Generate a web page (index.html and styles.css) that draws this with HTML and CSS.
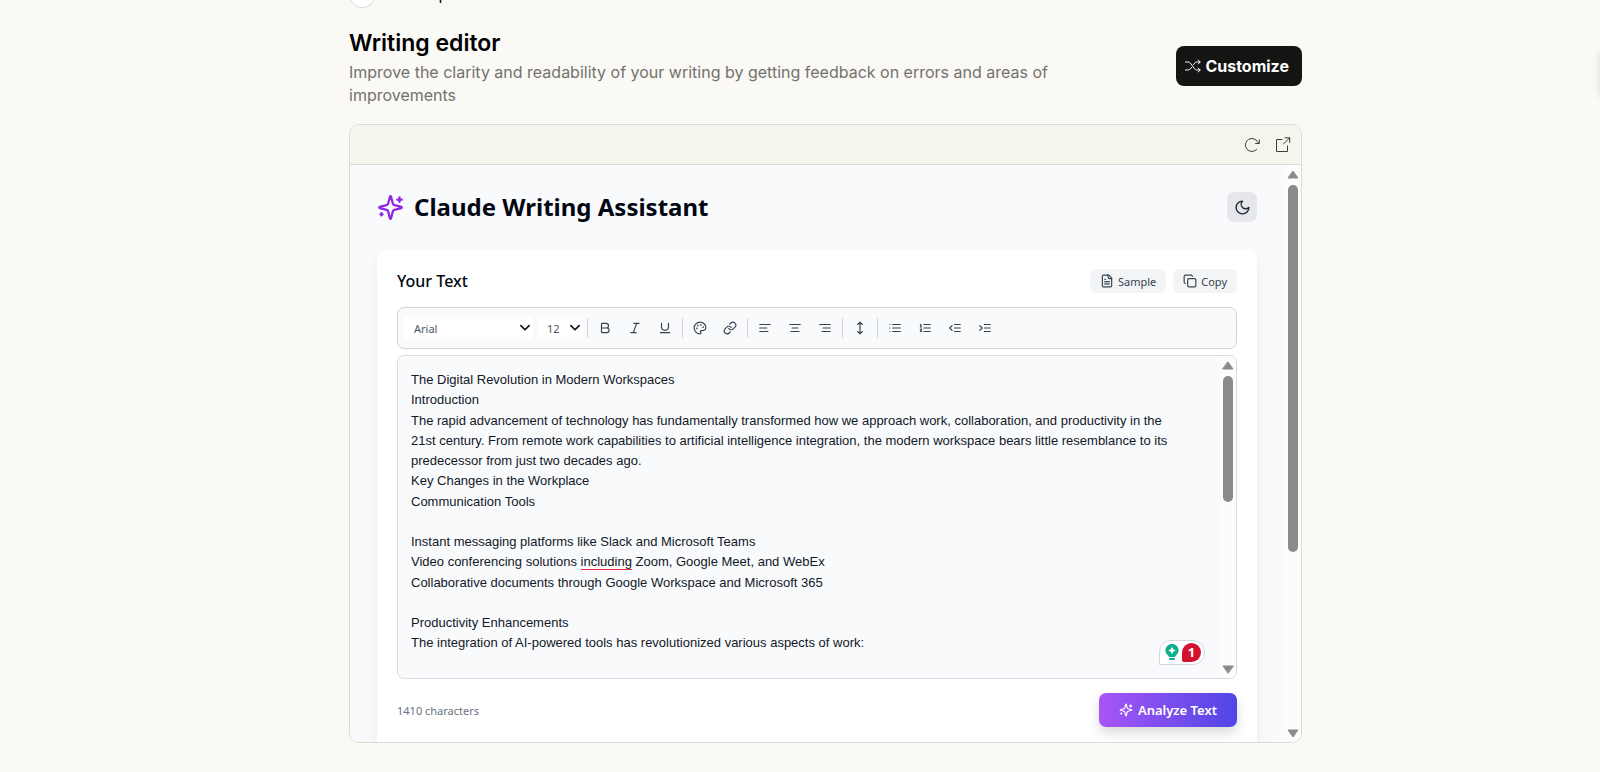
FILE: index.html
```html
<!DOCTYPE html>
<html lang="en">
<head>
    <meta charset="UTF-8">
    <meta name="viewport" content="width=device-width, initial-scale=1.0">
    <title>Writing editor</title>
    <link rel="stylesheet" href="styles.css">
</head>
<body>
    <main class="page">
        <div class="author">
            <span class="avatar"></span>
            <span class="author-name">Anthropic</span>
        </div>

        <header class="intro">
            <div class="intro-text">
                <h1>Writing editor</h1>
                <p>Improve the clarity and readability of your writing by getting feedback on errors and areas of improvements</p>
            </div>
            <button class="customize" type="button">
                <svg width="16" height="16" viewBox="0 0 16 16" fill="none" stroke="currentColor" stroke-linecap="round" stroke-linejoin="round"><path d="M.5 4h2.2c1.600 0 2.500.7 3.400 2l2.800 4c.9 1.300 1.800 2 3.400 2H15M.5 12h2.200c1.600 0 2.500-.7 3.400-2l.4-.6M8.500 6.600l.4-.6c.9-1.300 1.800-2 3.400-2H15M13.200 2 15.200 4l-2 2M13.200 10l2 2-2 2"/></svg>
                Customize
            </button>
        </header>

        <section class="frame">
            <div class="frame-bar">
                <button type="button" aria-label="Reload">
                    <svg width="16" height="16" viewBox="0 0 16 16" fill="none" stroke="currentColor" stroke-linecap="round" stroke-linejoin="round"><path d="M12.600 12.500a6.500 6.500 0 1 1 1.300-7L15 6.200M15.300 2.800v3.700h-3.700"/></svg>
                </button>
                <button type="button" aria-label="Open in new tab">
                    <svg width="16" height="16" viewBox="0 0 16 16" fill="none" stroke="currentColor" stroke-linecap="round" stroke-linejoin="round"><path d="M7 2.500H1.500v12h11V9M10 .8h4.700v4.700M14.500 1 8.500 7"/></svg>
                </button>
            </div>

            <div class="frame-body">
                <div class="app">
                    <div class="app-header">
                        <svg class="logo" width="27" height="27" viewBox="0 0 24 24"><use href="#sparkles"/></svg>
                        <h2>Claude Writing Assistant</h2>
                        <button class="theme" type="button" aria-label="Dark mode">
                            <svg width="17" height="17" viewBox="0 0 24 24"><path d="M12 3a6 6 0 0 0 9 9 9 9 0 1 1-9-9Z"/></svg>
                        </button>
                    </div>

                    <div class="card">
                        <div class="card-header">
                            <h3>Your Text</h3>
                            <button class="small" type="button">
                                <svg width="14" height="14" viewBox="0 0 24 24"><path d="M15 2H6a2 2 0 0 0-2 2v16a2 2 0 0 0 2 2h12a2 2 0 0 0 2-2V7Z"/><path d="M14 2v4a2 2 0 0 0 2 2h4M10 9H8M16 13H8M16 17H8"/></svg>
                                Sample
                            </button>
                            <button class="small" type="button">
                                <svg width="14" height="14" viewBox="0 0 24 24"><rect width="14" height="14" x="8" y="8" rx="2"/><path d="M4 16c-1.100 0-2-.9-2-2V4c0-1.100.9-2 2-2h10c1.100 0 2 .9 2 2"/></svg>
                                Copy
                            </button>
                        </div>

                        <div class="toolbar">
                            <span class="select font">
                                <select aria-label="Font"><option>Arial</option></select>
                                <svg width="14" height="14" viewBox="0 0 24 24"><path d="m5 8 7 7 7-7"/></svg>
                            </span>
                            <span class="select size">
                                <select aria-label="Font size"><option>12</option></select>
                                <svg width="14" height="14" viewBox="0 0 24 24"><path d="m5 8 7 7 7-7"/></svg>
                            </span>
                            <i class="divider"></i>
                            <button type="button" aria-label="Bold"><svg viewBox="0 0 24 24"><path d="M6 12h9a4 4 0 0 1 0 8H7a1 1 0 0 1-1-1V5a1 1 0 0 1 1-1h7a4 4 0 0 1 0 8"/></svg></button>
                            <button type="button" aria-label="Italic"><svg viewBox="0 0 24 24"><path d="M19 4h-9M14 20H5M15 4 9 20"/></svg></button>
                            <button type="button" aria-label="Underline"><svg viewBox="0 0 24 24"><path d="M6 4v6a6 6 0 0 0 12 0V4M4 20h16"/></svg></button>
                            <i class="divider"></i>
                            <button type="button" aria-label="Colour"><svg viewBox="0 0 24 24"><circle cx="13.500" cy="6.500" r=".5"/><circle cx="17.500" cy="10.500" r=".5"/><circle cx="8.500" cy="7.500" r=".5"/><circle cx="6.500" cy="12.500" r=".5"/><path d="M12 2C6.500 2 2 6.500 2 12s4.500 10 10 10c.926 0 1.648-.746 1.648-1.688 0-.437-.18-.835-.437-1.125-.29-.289-.438-.652-.438-1.125a1.640 1.640 0 0 1 1.668-1.668h1.996c3.051 0 5.555-2.503 5.555-5.554C21.965 6.012 17.461 2 12 2z"/></svg></button>
                            <button type="button" aria-label="Link"><svg viewBox="0 0 24 24"><path d="M10 13a5 5 0 0 0 7.540.54l3-3a5 5 0 0 0-7.070-7.070l-1.720 1.710"/><path d="M14 11a5 5 0 0 0-7.540-.54l-3 3a5 5 0 0 0 7.070 7.070l1.710-1.710"/></svg></button>
                            <i class="divider"></i>
                            <button type="button" aria-label="Align left"><svg viewBox="0 0 24 24"><path d="M21 6H3M15 12H3M17 18H3"/></svg></button>
                            <button type="button" aria-label="Align centre"><svg viewBox="0 0 24 24"><path d="M21 6H3M17 12H7M19 18H5"/></svg></button>
                            <button type="button" aria-label="Align right"><svg viewBox="0 0 24 24"><path d="M21 6H3M21 12H9M21 18H7"/></svg></button>
                            <i class="divider"></i>
                            <button type="button" aria-label="Line height"><svg viewBox="0 0 24 24"><path d="M12 2v20M8 18l4 4 4-4M8 6l4-4 4 4"/></svg></button>
                            <i class="divider"></i>
                            <button type="button" aria-label="Bullet list"><svg viewBox="0 0 24 24"><path d="M3 12h.01M3 18h.01M3 6h.01M8 12h13M8 18h13M8 6h13"/></svg></button>
                            <button type="button" aria-label="Numbered list"><svg viewBox="0 0 24 24"><path d="M10 12h11M10 18h11M10 6h11M4 10h2M4 6h1v4M6 18H4c0-1 2-2 2-3s-1-1.500-2-1"/></svg></button>
                            <button type="button" aria-label="Outdent"><svg viewBox="0 0 24 24"><path d="M21 12H11M21 18H11M21 6H11M7 8l-4 4 4 4"/></svg></button>
                            <button type="button" aria-label="Indent"><svg viewBox="0 0 24 24"><path d="M21 12H11M21 18H11M21 6H11M3 8l4 4-4 4"/></svg></button>
                        </div>

                        <div class="editor">
                            <div class="editor-text" contenteditable="true" role="textbox" aria-label="Your Text" spellcheck="false">
                                <div>The Digital Revolution in Modern Workspaces</div>
                                <div>Introduction</div>
                                <div>The rapid advancement of technology has fundamentally transformed how we approach work, collaboration, and productivity in the 21st century. From remote work capabilities to artificial intelligence integration, the modern workspace bears little resemblance to its predecessor from just two decades ago.</div>
                                <div>Key Changes in the Workplace</div>
                                <div>Communication Tools</div>
                                <div><br></div>
                                <div>Instant messaging platforms like Slack and Microsoft Teams</div>
                                <div>Video conferencing solutions <span class="mistake">including</span> Zoom, Google Meet, and WebEx</div>
                                <div>Collaborative documents through Google Workspace and Microsoft 365</div>
                                <div><br></div>
                                <div>Productivity Enhancements</div>
                                <div>The integration of AI-powered tools has revolutionized various aspects of work:</div>
                            </div>
                            <div class="scrollbar">
                                <svg width="12" height="9" viewBox="0 0 12 9"><path d="M6 1 11 8H1Z"/></svg>
                                <div class="track"><div class="thumb editor-thumb"></div></div>
                                <svg width="12" height="9" viewBox="0 0 12 9"><path d="M6 8 1 1h10Z"/></svg>
                            </div>
                            <div class="checker">
                                <svg width="14" height="17" viewBox="0 0 14 17"><path fill="#0fae8e" d="M7 0a6.500 6.500 0 0 1 3.800 11.800L10 13H4l-.8-1.200A6.500 6.500 0 0 1 7 0Z"/><path fill="#0fae8e" d="M4 14h6v1L9 16H5l-1-1Z"/><path fill="#fff" d="M7 2.800 8.200 5.300 10.700 6.500 8.200 7.700 7 10.200 5.800 7.700 3.300 6.500 5.800 5.300Z"/></svg>
                                <span class="count">1</span>
                            </div>
                        </div>

                        <div class="card-footer">
                            <span class="chars">1410 characters</span>
                            <button class="analyze" type="button">
                                <svg width="14" height="14" viewBox="0 0 24 24"><use href="#sparkles"/></svg>
                                Analyze Text
                            </button>
                        </div>
                    </div>
                </div>
                <div class="scrollbar">
                    <svg width="12" height="9" viewBox="0 0 12 9"><path d="M6 1 11 8H1Z"/></svg>
                    <div class="track"><div class="thumb app-thumb"></div></div>
                    <svg width="12" height="9" viewBox="0 0 12 9"><path d="M6 8 1 1h10Z"/></svg>
                </div>
            </div>
        </section>
    </main>
    <aside class="side-tab"></aside>

    <svg class="symbols" width="0" height="0">
        <symbol id="sparkles" viewBox="0 0 24 24">
            <path d="M9.937 15.500A2 2 0 0 0 8.500 14.063l-6.135-1.582a.5.5 0 0 1 0-.962L8.500 9.936A2 2 0 0 0 9.937 8.500l1.582-6.135a.5.5 0 0 1 .963 0L14.063 8.500A2 2 0 0 0 15.500 9.937l6.135 1.581a.5.5 0 0 1 0 .964L15.500 14.063a2 2 0 0 0-1.437 1.437l-1.582 6.135a.5.5 0 0 1-.963 0z"/>
            <path d="M20 3v4M22 5h-4M4 17v2M5 18H3"/>
        </symbol>
    </svg>
</body>
</html>
```

FILE: styles.css
```css
* {
    box-sizing: border-box;
}
body {
    margin: 0;
    padding-left: 51px;
    min-height: 100vh;
    background: #faf9f5;
    font-family: "Noto Sans", sans-serif;
    overflow: hidden;
}
h1, h2, h3, p {
    margin: 0;
}
button {
    display: flex;
    align-items: center;
    justify-content: center;
    padding: 0;
    border: none;
    background: none;
    color: inherit;
    font-family: inherit;
    cursor: pointer;
}
.page {
    max-width: 953px;
    margin: 0 auto;
}

/* author row is scrolled mostly out of view */
.author {
    display: flex;
    align-items: center;
    gap: 12px;
    height: 28px;
    margin-top: -20px;
    font-family: "Inter", sans-serif;
    font-size: 16px;
}
.avatar {
    width: 27px;
    height: 28px;
    border: 1px solid #dedcd4;
    border-radius: 50%;
    background: #fff;
}

.intro {
    display: flex;
    align-items: center;
    justify-content: space-between;
    padding: 17px 0;
    font-family: "Inter", sans-serif;
}
.intro-text {
    max-width: 720px;
}
.intro h1 {
    font-size: 23px;
    line-height: 36px;
    font-weight: 600;
    color: #000;
}
.intro p {
    font-size: 16px;
    line-height: 23px;
    color: #73726c;
}
.customize {
    gap: 4px;
    height: 40px;
    padding: 0 13px 0 9px;
    border-radius: 8px;
    background: #141413;
    color: #fff;
    font-size: 16px;
    font-weight: 700;
}

.frame {
    border: 1px solid #dcdbd6;
    border-radius: 10px;
    overflow: hidden;
}
.frame-bar {
    display: flex;
    align-items: center;
    justify-content: flex-end;
    gap: 15px;
    height: 40px;
    padding: 0 10px;
    border-bottom: 1px solid #dcdbd6;
    background: #f5f4ed;
    color: #3d3d3a;
}
.frame-body {
    display: flex;
    height: 577px;
    background: #f9fafc;
}
.app {
    flex: 1;
    padding: 27px 28px 0 27px;
    color: #030712;
    overflow: hidden;
}
.app svg {
    fill: none;
    stroke: currentColor;
    stroke-width: 2;
    stroke-linecap: round;
    stroke-linejoin: round;
}

.scrollbar {
    display: flex;
    flex-direction: column;
    align-items: center;
    width: 16px;
    padding: 5px 0 4px;
    background: #fcfcfc;
}
.scrollbar svg, .app .scrollbar svg {
    fill: #8b8b8b;
    stroke: #8b8b8b;
    stroke-width: 1;
    stroke-linejoin: round;
}
.track {
    flex: 1;
    padding: 6px 0;
}
.thumb {
    width: 10px;
    border-radius: 5px;
    background: #8b8b8b;
}
.app-thumb {
    height: 367px;
}
.editor-thumb {
    height: 126px;
}

.app-header {
    display: flex;
    align-items: center;
    gap: 10px;
}
.logo {
    color: #9026e6;
}
.app-header h2 {
    flex: 1;
    font-size: 24px;
    line-height: 30px;
    font-weight: 700;
}
.theme {
    width: 30px;
    height: 30px;
    border-radius: 7px;
    background: #e5e7eb;
    color: #1f2937;
}

.card {
    height: 620px;
    margin-top: 27px;
    padding: 20px;
    border-radius: 10px;
    background: #fff;
    box-shadow: 0 8px 14px rgba(0, 0, 0, 0.06);
}
.card-header {
    display: flex;
    align-items: center;
    gap: 7px;
}
.card-header h3 {
    flex: 1;
    font-size: 16px;
    line-height: 24px;
    font-weight: 500;
}
.small {
    gap: 4px;
    height: 24px;
    padding: 0 10px;
    border-radius: 6px;
    background: #f3f4f6;
    color: #374151;
    font-size: 11px;
}

.toolbar {
    display: flex;
    align-items: center;
    gap: 4px;
    height: 42px;
    margin-top: 14px;
    padding: 0 6px;
    border: 1px solid #d1d5db;
    border-radius: 7px;
    background: #f9fafb;
    color: #374151;
}
.toolbar button {
    width: 26px;
    height: 26px;
}
.toolbar button svg {
    width: 14px;
    height: 14px;
}
.divider {
    width: 1px;
    height: 20px;
    background: #d1d5db;
}
.select {
    position: relative;
}
.font {
    width: 129px;
}
.size {
    width: 46px;
}
.select select {
    display: block;
    width: 100%;
    height: 22px;
    padding: 0 10px;
    border: none;
    border-radius: 4px;
    background: #fff;
    color: #4b5563;
    font-family: inherit;
    font-size: 11px;
    appearance: none;
}
.app .select svg {
    position: absolute;
    top: 4px;
    right: 1px;
    color: #111827;
    stroke-width: 3;
    pointer-events: none;
}

.editor {
    position: relative;
    display: flex;
    height: 324px;
    margin-top: 6px;
    border: 1px solid #d9dce1;
    border-radius: 7px;
    background: #f9fafc;
    overflow: hidden;
}
.editor-text {
    flex: 1;
    padding: 14px 40px 14px 13px;
    font-family: "Liberation Sans", Arial, sans-serif;
    font-size: 13px;
    line-height: 1.56;
    color: #111827;
    outline: none;
}
.mistake {
    border-bottom: 1px solid #f0293e;
}
.checker {
    position: absolute;
    right: 31px;
    bottom: 13px;
    display: flex;
    align-items: center;
    gap: 3px;
    height: 25px;
    padding: 0 3px 0 5px;
    border: 1px solid #d5d6e3;
    border-radius: 12px 12px 12px 0;
    background: #fff;
}
.app .checker svg {
    stroke: none;
}
.count {
    width: 19px;
    height: 19px;
    border-radius: 10px 10px 10px 2px;
    background: #d3122f;
    color: #fff;
    font-size: 13px;
    line-height: 18px;
    font-weight: 700;
    text-align: center;
}

.card-footer {
    display: flex;
    align-items: center;
    justify-content: space-between;
    margin-top: 14px;
}
.chars {
    font-size: 11px;
    color: #6b7280;
}
.analyze {
    gap: 5px;
    height: 34px;
    padding: 0 20px;
    border-radius: 7px;
    background: linear-gradient(to right, #a855f7, #4f46e5);
    box-shadow: 0 6px 12px rgba(0, 0, 0, 0.15);
    color: #fff;
    font-size: 13px;
    font-weight: 600;
}

/* collapsed tab, only its shadow shows at the window edge */
.side-tab {
    position: fixed;
    top: 52px;
    left: 100%;
    width: 40px;
    height: 44px;
    box-shadow: 0 0 8px rgba(0, 0, 0, 0.12);
}
.symbols {
    position: absolute;
}
```
